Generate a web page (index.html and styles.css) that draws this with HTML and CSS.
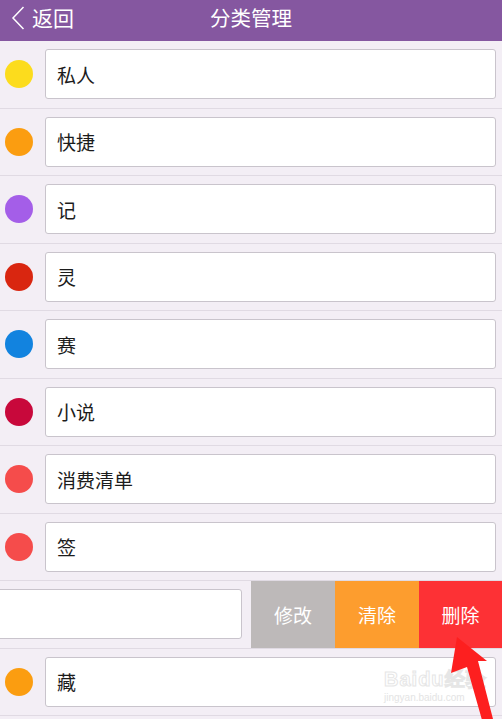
FILE: index.html
```html
<!DOCTYPE html>
<html lang="zh">
<head>
<meta charset="utf-8">
<link rel="stylesheet" href="styles.css">
</head>
<body>
<div class="app">
  <header class="topbar">
    <div class="back"><svg class="chev" width="14" height="24" viewBox="0 0 14 24"><path d="M12.5 1 L2 12 L12.5 23" fill="none" stroke="#fff" stroke-width="1.5"/></svg><span>返回</span></div>
    <div class="title">分类管理</div>
  </header>
  <div class="list">
    <div class="row"><span class="dot c-yellow"></span><div class="field">私人</div></div>
    <div class="row"><span class="dot c-orange"></span><div class="field">快捷</div></div>
    <div class="row"><span class="dot c-purple"></span><div class="field">记</div></div>
    <div class="row"><span class="dot c-red"></span><div class="field">灵</div></div>
    <div class="row"><span class="dot c-blue"></span><div class="field">赛</div></div>
    <div class="row"><span class="dot c-crimson"></span><div class="field">小说</div></div>
    <div class="row"><span class="dot c-salmon"></span><div class="field">消费清单</div></div>
    <div class="row"><span class="dot c-salmon"></span><div class="field">签</div></div>
    <div class="row swiped">
      <div class="slide"><div class="field wide"></div></div>
      <div class="act gray">修改</div>
      <div class="act orange">清除</div>
      <div class="act red">删除</div>
    </div>
    <div class="row"><span class="dot c-orange"></span><div class="field">藏</div></div>
  </div>
  <div class="watermark">
    <div class="wm1">Bai<span class="paw">du</span>经验</div>
    <div class="wm2">jingyan.baidu.com</div>
  </div>
  <svg class="arrow" width="60" height="90" viewBox="0 0 60 90"><polygon points="17,7 47,31 38,31 53,89 42,90 27,37 11,43" fill="#fd1f1f"/></svg>
</div>
</body>
</html>
```
FILE: styles.css
```css
* { box-sizing: border-box; }
html, body { margin: 0; padding: 0; }
body {
  width: 502px;
  height: 719px;
  overflow: hidden;
  background: #f3eef5;
  font-family: "Noto Sans CJK SC", "Noto Sans", sans-serif;
}
.app { position: relative; width: 502px; height: 719px; overflow: hidden; }
.topbar {
  height: 41px;
  background: #8557a0;
  color: #fff;
  display: flex;
  align-items: center;
  position: relative;
  font-size: 20.5px;
  padding-bottom: 6px;
}
.back {
  display: flex;
  align-items: center;
  gap: 7px;
  padding-left: 11px;
  line-height: 1;
  font-size: 21px;
}
.chev { display: block; }
.title {
  position: absolute;
  left: 0;
  right: 0;
  text-align: center;
  line-height: 35px;
  top: 0;
  pointer-events: none;
}
.list { display: flex; flex-direction: column; }
.row {
  height: 67.5px;
  display: flex;
  align-items: center;
  gap: 12px;
  padding: 0 6px 0 5px;
  border-bottom: 1px solid #e0dae3;
}
.dot {
  width: 28px;
  height: 28px;
  border-radius: 50%;
  flex: none;
}
.c-yellow { background: #fcdc1d; }
.c-orange { background: #fb9d10; }
.c-purple { background: #a45ee8; }
.c-red { background: #d92610; }
.c-blue { background: #1283df; }
.c-crimson { background: #c8083b; }
.c-salmon { background: #f54c4b; }
.field {
  flex: 1;
  height: 50px;
  background: #fff;
  border: 1px solid #c9c4cc;
  border-radius: 3px;
  display: flex;
  align-items: center;
  padding-left: 11px;
  font-size: 19px;
  color: #1c1c1c;
}
.row.swiped { padding: 0; gap: 0; }
.slide {
  flex: 1;
  height: 100%;
  display: flex;
  align-items: center;
  padding-right: 9px;
  overflow: hidden;
}
.field.wide { flex: none; width: 300px; margin-left: -58px; }
.act {
  width: 84px;
  height: 100%;
  display: flex;
  align-items: center;
  justify-content: center;
  color: #fff;
  font-size: 19px;
  flex: none;
}
.act.gray { background: #bdb9b9; }
.act.orange { background: #fd9d2e; }
.act.red { background: #fd3135; width: 83px; }
.watermark {
  position: absolute;
  left: 384px;
  top: 667px;
  color: transparent;
  -webkit-text-stroke: 1px #e6e6e6;
  font-family: "Liberation Sans", sans-serif;
  pointer-events: none;
}
.wm1 { font-size: 20px; font-weight: bold; line-height: 24px; letter-spacing: 1px; }
.wm2 { font-size: 10px; line-height: 14px; -webkit-text-stroke: 0; color: #e4e4e4; }
.arrow { position: absolute; left: 440px; top: 630px; }
```
